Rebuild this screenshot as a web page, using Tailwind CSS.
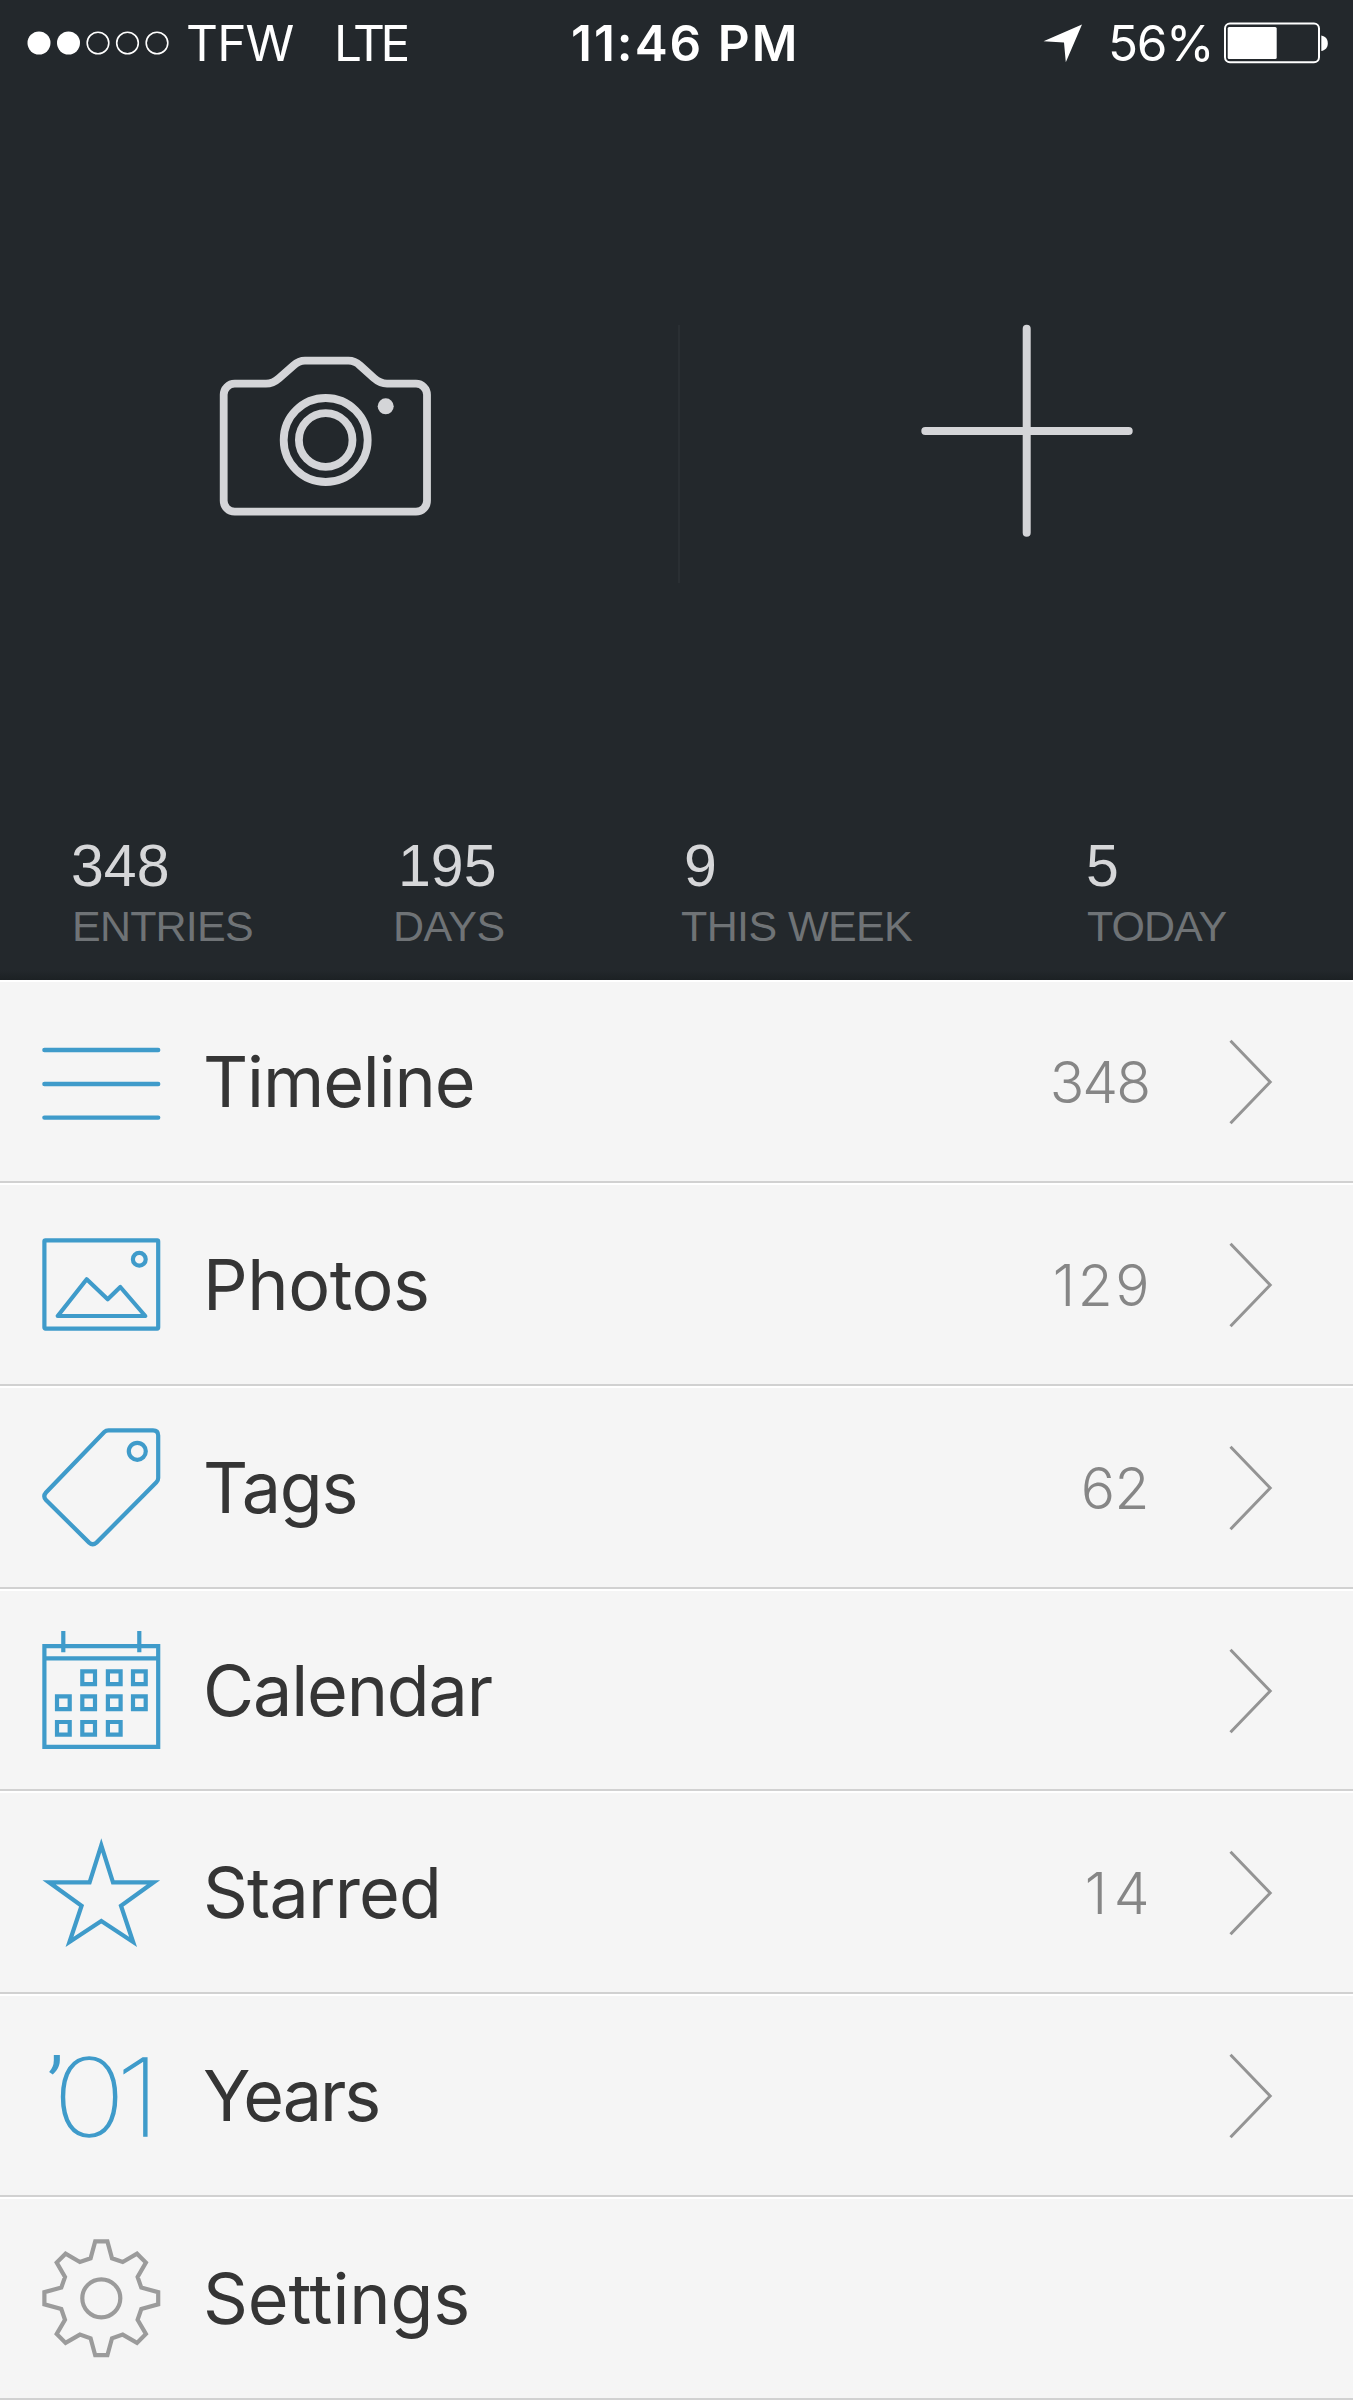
<!DOCTYPE html>
<html lang="en">
<head>
<meta charset="utf-8">
<title>Journal</title>
<script src="https://cdn.jsdelivr.net/npm/@tailwindcss/browser@4"></script>
</head>
<body class="w-[1353px] bg-[#f5f5f5] font-['Inter',sans-serif] text-[#353535]">

<header class="flex h-[980px] flex-col bg-[#23282c]">
  <!-- Status bar -->
  <div class="flex h-[86px] items-center pl-[27px] text-[49.5px] leading-[60px] text-white">
    <svg class="h-6 w-[142px] shrink-0" viewBox="0 0 142 24" fill="none" stroke="#fff" stroke-width="1.6">
      <circle cx="12" cy="12" r="11.5" fill="#fff" stroke="none"/>
      <circle cx="41.5" cy="12" r="11.5" fill="#fff" stroke="none"/>
      <circle cx="71" cy="12" r="10.8"/>
      <circle cx="100.5" cy="12" r="10.8"/>
      <circle cx="130" cy="12" r="10.8"/>
    </svg>
    <span class="ml-[17px] w-[148px] tracking-[-0.8px]">TFW</span>
    <span class="w-[237px] tracking-[-4.3px]">LTE</span>
    <span class="w-[472px] font-semibold tracking-[2px] whitespace-nowrap">11:46 PM</span>
    <svg class="h-[40px] w-[40px] shrink-0" viewBox="0 0 40 40"><path fill="#fff" d="M39 1.5 0.5 18.2 21 19.5 22.8 39.2Z"/></svg>
    <span class="ml-[25px] w-[116px] tracking-[-1.4px]">56%</span>
    <svg class="h-[42px] w-[104px] shrink-0" viewBox="0 0 104 42">
      <rect x="1" y="1.6" width="94" height="38.6" rx="5" fill="none" stroke="#fff" stroke-width="2"/>
      <rect x="3.7" y="5" width="49" height="32" rx="1.5" fill="#fff"/>
      <path fill="#fff" d="M97.3 13.5c4.2.8 6.5 3.6 6.5 7.8s-2.300 7-6.500 7.800Z"/>
    </svg>
  </div>

  <!-- Capture actions -->
  <div class="flex h-[747px] items-start">
    <svg class="mt-[269px] ml-[218px] h-[162px] w-[214px] shrink-0" viewBox="0 0 214 162" fill="none" stroke="#d4d5d8" stroke-width="7.800">
      <path d="M16.700 28.700H48c6 0 9-2 13-5.500L75.500 10.500C79 7.300 82 5.700 87 5.700h43.500c5 0 8 1.600 11.500 4.800l14 12.700c4 3.500 8 5.500 13 5.500h29a11 11 0 0 1 11 11v106a11 11 0 0 1-11 11H16.700a11 11 0 0 1-11-11v-106a11 11 0 0 1 11-11Z"/>
      <circle cx="107.700" cy="85" r="42"/>
      <circle cx="107.700" cy="85" r="26.800"/>
      <circle cx="167.700" cy="51.300" r="8" fill="#d4d5d8" stroke="none"/>
    </svg>
    <div class="mt-[239px] ml-[246px] h-[258px] w-[2px] bg-[#2a2f33]"></div>
    <svg class="mt-[238px] ml-[240px] h-[214px] w-[214px] shrink-0" viewBox="0 0 214 214" fill="none" stroke="#d4d5d8" stroke-width="8" stroke-linecap="round">
      <path d="M106.700 4.800V208.700M5.300 107H208.700"/>
    </svg>
  </div>

  <!-- Totals -->
  <div class="grid grid-cols-[320px_289px_405px_1fr] pl-[72px] font-['Liberation_Sans',sans-serif] text-[43px] leading-[49px] whitespace-nowrap text-[#6f7376]">
    <div><div class="-ml-px text-[59px] leading-[66px] text-[#d6d7d9]">348</div><div class="mt-[3px] tracking-[-0.8px]">ENTRIES</div></div>
    <div><div class="pl-[6px] text-[59px] leading-[66px] text-[#d6d7d9]">195</div><div class="mt-[3px] pl-px tracking-[-0.6px]">DAYS</div></div>
    <div><div class="pl-[3px] text-[59px] leading-[66px] text-[#d6d7d9]">9</div><div class="mt-[3px] tracking-[-0.6px]">THIS WEEK</div></div>
    <div><div class="text-[59px] leading-[66px] text-[#d6d7d9]">5</div><div class="mt-[3px] pl-px tracking-[-1px]">TODAY</div></div>
  </div>
  <div class="mt-auto h-[10px] bg-linear-to-b from-[#23282c] to-[#1c2124]"></div>
</header>

<nav class="text-[70px] leading-[85px]">
  <a class="flex h-[203px] items-center border-t-2 border-b-2 border-t-white border-b-[#d1d1d1] pr-20 pl-[42px]">
    <svg class="h-[119px] w-[119px] shrink-0" viewBox="0 0 119 119" fill="none" stroke="#3f9bca" stroke-width="4.400" stroke-linecap="round"><path d="M2.400 28H116.200M2.400 62H116.200M2.400 95.600H116.200"/></svg>
    <span class="ml-[42px] tracking-[-1.1px]">Timeline</span>
    <span class="mr-[80px] ml-auto pt-[2px] text-[57px] leading-[69px] font-light tracking-[-2px] text-[#868686]">348</span>
    <svg class="h-[87px] w-[44px] shrink-0" viewBox="0 0 44 87" fill="none" stroke="#949494" stroke-width="3"><path d="M1.500 2.800 41.200 44 1.500 85.200"/></svg>
  </a>
  <a class="flex h-[203px] items-center border-t-2 border-b-2 border-t-white border-b-[#d1d1d1] pr-20 pl-[42px]">
    <svg class="h-[119px] w-[119px] shrink-0" viewBox="0 0 119 119" fill="none" stroke="#3f9bca" stroke-width="4.200" stroke-linejoin="round"><rect x="2.400" y="15.400" width="113.800" height="88.200" rx="1"/><circle cx="97.300" cy="34.200" r="6.400"/><path d="M15.700 91 44.700 54.300 65.700 74.200 78.300 62 103.300 91Z"/></svg>
    <span class="ml-[42px] tracking-[-0.45px]">Photos</span>
    <span class="mr-[77px] ml-auto pt-[2px] text-[57px] leading-[69px] font-light tracking-[2.5px] text-[#868686]">129</span>
    <svg class="h-[87px] w-[44px] shrink-0" viewBox="0 0 44 87" fill="none" stroke="#949494" stroke-width="3"><path d="M1.500 2.800 41.200 44 1.500 85.200"/></svg>
  </a>
  <a class="flex h-[203px] items-center border-t-2 border-b-2 border-t-white border-b-[#d1d1d1] pr-20 pl-[42px]">
    <svg class="h-[119px] w-[119px] shrink-0" viewBox="0 0 119 119" fill="none" stroke="#3f9bca" stroke-width="4.200"><path d="M66.500 2.400H111q5.200 0 5.200 5.200V50q0 2.500-1.800 4.300L54.500 114.600q-3.800 3.200-7.400 0L4 72q-3.400-3.700 0-7.500L62.300 4q1.700-1.600 4.200-1.600Z"/><circle cx="95.300" cy="23.300" r="8.500"/></svg>
    <span class="ml-[42px] tracking-[-1.3px]">Tags</span>
    <span class="mr-[80px] ml-auto pt-[2px] text-[57px] leading-[69px] font-light tracking-[-0.5px] text-[#868686]">62</span>
    <svg class="h-[87px] w-[44px] shrink-0" viewBox="0 0 44 87" fill="none" stroke="#949494" stroke-width="3"><path d="M1.500 2.800 41.200 44 1.500 85.200"/></svg>
  </a>
  <a class="flex h-[202px] items-center border-t-2 border-b-2 border-t-white border-b-[#d1d1d1] pr-20 pl-[42px]">
    <svg class="h-[118px] w-[119px] shrink-0" viewBox="0 0 119 118" fill="none" stroke="#3f9bca" stroke-width="4.200">
      <path d="M2.400 15.100H116.200V115.900H2.400ZM2.400 27.300H116.200M21.300 0V21.300M97.300 0V21.300"/>
      <path d="M40.300 40.400h12.700v12.700h-12.700ZM65.900 40.400h12.700v12.700h-12.700ZM91 40.400h12.700v12.700h-12.700ZM15 65.400h12.700v12.700h-12.700ZM40.300 65.400h12.700v12.700h-12.700ZM65.900 65.400h12.700v12.700h-12.700ZM91 65.400h12.700v12.700h-12.700ZM15 91h12.700v12.700h-12.700ZM40.300 91h12.700v12.700h-12.700ZM65.900 91h12.700v12.700h-12.700Z"/>
    </svg>
    <span class="ml-[42px] tracking-[-1.14px]">Calendar</span>
    <svg class="ml-auto h-[87px] w-[44px] shrink-0" viewBox="0 0 44 87" fill="none" stroke="#949494" stroke-width="3"><path d="M1.500 2.800 41.200 44 1.500 85.200"/></svg>
  </a>
  <a class="flex h-[203px] items-center border-t-2 border-b-2 border-t-white border-b-[#d1d1d1] pr-20 pl-[42px]">
    <svg class="h-[119px] w-[119px] shrink-0" viewBox="0 0 119 119" fill="none" stroke="#3f9bca" stroke-width="4.200" stroke-miterlimit="10"><path d="M59.300 12.300 71 49.300H111.600L79 72.700 91.100 109 59.300 88 27.500 109 39.600 72.700 7 49.300H47.600Z"/></svg>
    <span class="ml-[42px] tracking-[-0.8px]">Starred</span>
    <span class="mr-[73px] ml-auto pt-[2px] text-[57px] leading-[69px] font-light tracking-[6.500px] text-[#868686]">14</span>
    <svg class="h-[87px] w-[44px] shrink-0" viewBox="0 0 44 87" fill="none" stroke="#949494" stroke-width="3"><path d="M1.500 2.800 41.200 44 1.500 85.200"/></svg>
  </a>
  <a class="flex h-[203px] items-center border-t-2 border-b-2 border-t-white border-b-[#d1d1d1] pr-20 pl-[42px]">
    <svg class="h-[119px] w-[119px] shrink-0 overflow-visible font-thin" viewBox="0 0 119 119" fill="#3f9bca" stroke="#3f9bca" stroke-width="1.400">
      <text transform="scale(1.15 1)" font-size="107" letter-spacing="-8.600"><tspan x="3.500" y="87" font-size="90" class="font-['Roboto'] font-light" stroke="none">’</tspan><tspan x="9.300" y="99.700">01</tspan></text>
    </svg>
    <span class="ml-[42px] tracking-[-2px]">Years</span>
    <svg class="ml-auto h-[87px] w-[44px] shrink-0" viewBox="0 0 44 87" fill="none" stroke="#949494" stroke-width="3"><path d="M1.500 2.800 41.200 44 1.500 85.200"/></svg>
  </a>
  <a class="flex h-[203px] items-center border-t-2 border-b-2 border-t-white border-b-[#d1d1d1] pr-20 pl-[42px]">
    <svg class="h-[119px] w-[119px] shrink-0" viewBox="0 0 119 119" fill="none" stroke="#9b9b9b" stroke-width="4.200"><g transform="translate(59.300 59.300)"><circle r="19"/><path d="M-6.100-56.900H6.100L10.700-40 21.400-36.300 35.700-44.600 44.600-35.700 36.300-21.400 40-10.700 56.900-6.100V6.100L40 10.700 36.300 21.400 44.600 35.700 35.700 44.600 21.400 36.300 10.700 40 6.100 56.900H-6.100L-10.700 40-21.400 36.300-35.700 44.600-44.600 35.700-36.300 21.400-40 10.700-56.900 6.100V-6.100L-40-10.700-36.300-21.400-44.600-35.700-35.700-44.600-21.400-36.300-10.700-40Z"/></g></svg>
    <span class="ml-[42px] tracking-[-0.1px]">Settings</span>
  </a>
</nav>
</body>
</html>
